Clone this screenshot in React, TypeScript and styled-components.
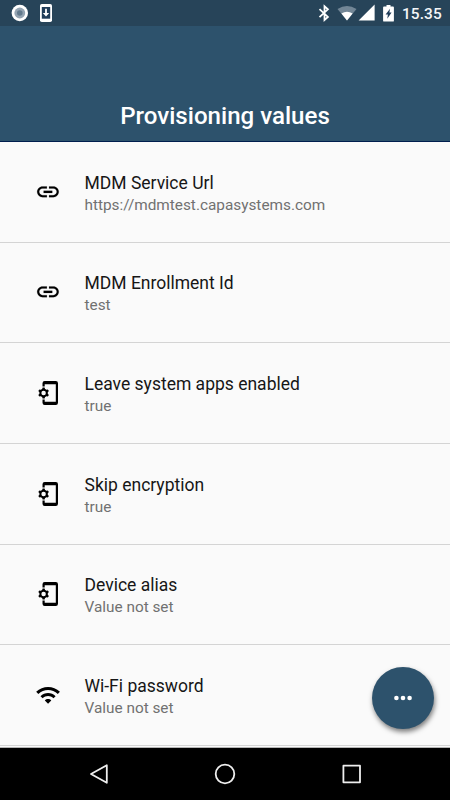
import React from "react";
import styled, { createGlobalStyle } from "styled-components";

const GlobalStyle = createGlobalStyle`
  *, *::before, *::after { box-sizing: border-box; }
  body { margin: 0; font-family: Roboto, sans-serif; background: #fafafa; }
  svg { display: block; flex: none; }
`;

const Screen = styled.div`
  position: relative;
  width: 450px;
  height: 800px;
  overflow: hidden;
  display: flex;
  flex-direction: column;
  background: #fafafa;
`;

const StatusBar = styled.div`
  height: 26px;
  flex: none;
  display: flex;
  align-items: center;
  justify-content: space-between;
  padding: 0 9px 0 11px;
  background: #274459;
`;

const StatusGroup = styled.div<{ $gap: number }>`
  display: flex;
  align-items: center;
  gap: ${(p) => p.$gap}px;
`;

const Clock = styled.span`
  width: 39px;
  margin-left: 1px;
  padding-top: 2px;
  font-size: 15.4px;
  font-weight: 500;
  line-height: 26px;
  letter-spacing: 0.1px;
  color: #f4f6f8;
  white-space: nowrap;
`;

const Header = styled.header`
  height: 116px;
  flex: none;
  display: flex;
  align-items: flex-end;
  justify-content: center;
  padding-bottom: 10px;
  background: #2d526c;
  border-bottom: 1px solid #001e4e;
`;

const Title = styled.h1`
  margin: 0;
  font-size: 24.1px;
  line-height: 30px;
  font-weight: 500;
  color: #fff;
`;

const List = styled.ul`
  list-style: none;
  margin: 0;
  padding: 0;
  flex: 1;
  min-height: 0;
  overflow: hidden;
  border-bottom: 1px solid #b5b5b5;
`;

const Row = styled.li`
  height: 100.65px;
  display: flex;
  align-items: center;
  padding: 0 36px;
  border-bottom: 1px solid #d4d4d4;
`;

const IconSlot = styled.span`
  width: 48.5px;
  flex: none;
`;

const RowText = styled.div`
  display: flex;
  flex-direction: column;
  padding-top: 3.7px;
`;

const Label = styled.span`
  font-size: 17.5px;
  line-height: 22px;
  color: #161616;
`;

const Value = styled.span`
  font-size: 15.35px;
  line-height: 22px;
  color: #717171;
`;

const Fab = styled.button`
  position: absolute;
  left: 372px;
  top: 667px;
  width: 62px;
  height: 62px;
  padding: 0;
  border: 0;
  border-radius: 50%;
  display: grid;
  place-items: center;
  background: #2d526c;
  box-shadow: 1px 3px 5px rgba(0, 0, 0, 0.5);
`;

const NavBar = styled.nav`
  height: 52px;
  flex: none;
  display: flex;
  align-items: center;
  justify-content: space-between;
  padding: 0 86px;
  background: #000;
`;

const RecordIcon = () => (
  <svg width="18" height="18" viewBox="0 0 18 18">
    <circle cx="8.8" cy="9" r="8.2" fill="#fff" />
    <circle cx="8.8" cy="9" r="5.4" fill="#94a4b2" />
    <circle cx="8.8" cy="9" r="2.8" fill="#627a8d" />
  </svg>
);

const DownloadIcon = () => (
  <svg width="12" height="18" viewBox="0 0 12 18">
    <rect width="12" height="18" rx="1.8" fill="#fff" />
    <rect x="1.8" y="3" width="8.4" height="11.7" fill="#203d5a" />
    <path d="M5.1 4.8h1.8v4.1h2.3L6 12.4 2.8 8.9h2.3z" fill="#fff" />
  </svg>
);

const BluetoothIcon = () => (
  <svg width="12" height="18" viewBox="0 0 12 18" fill="none" stroke="#fff" strokeWidth="1.8">
    <path d="M1.5 5.2 9.9 12.9 6.5 15.9V2.3l3.4 3-8.4 7.9" />
  </svg>
);

const SignalIcon = () => (
  <svg width="39" height="18" viewBox="0 0 39 18">
    <path d="M.5 4.9Q10 -.9 19.5 4.9L10 16.6z" fill="#728696" />
    <path d="M4.4 9.6Q10 6.1 15.6 9.6L10 16.6z" fill="#fff" />
    <path d="M37.6 .6V16.6H21.6z" fill="#fff" />
  </svg>
);

const BatteryIcon = () => (
  <svg width="11" height="17" viewBox="0 0 11 17">
    <path
      d="M3.5 0h4v1.6H10q.9 0 .9.9v13.2q0 .9-.9.9H1q-.9 0-.9-.9V2.5q0-.9.9-.9h2.5z"
      fill="#fff"
    />
    <path d="M7 3.8 6.4 7.5h2.2L4.3 13.8l.6-4.3H2.6z" fill="#203d5a" />
  </svg>
);

const LinkIcon = () => (
  <svg width="24" height="24" viewBox="0 0 24 24">
    <path
      transform="translate(-1 -1.1) scale(1.08)"
      d="M3.9 12c0-1.71 1.39-3.1 3.1-3.1h4V7H7c-2.76 0-5 2.24-5 5s2.24 5 5 5h4v-1.9H7c-1.71 0-3.1-1.39-3.1-3.1zM8 13h8v-2H8v2zm9-6h-4v1.9h4c1.71 0 3.1 1.39 3.1 3.1s-1.39 3.1-3.1 3.1h-4V17h4c2.76 0 5-2.24 5-5s-2.24-5-5-5z"
      stroke="#000"
      strokeWidth="0.15"
    />
  </svg>
);

const teeth = [0, 60, 120, 180, 240, 300];

const PhoneSettingsIcon = () => (
  <svg width="24" height="26" viewBox="0 0 24 26">
    <path
      fillRule="evenodd"
      d="M6.5 6.4V3.2Q6.5 1 8.7 1H19.8Q22 1 22 3.2V22.8Q22 25 19.8 25H8.7Q6.5 25 6.5 22.8V19.6H8.7V21.7H19.8V4.3H8.7V6.4z"
    />
    <circle cx="7.6" cy="13" r="3.2" fill="none" stroke="#000" strokeWidth="1.9" />
    {teeth.map((angle) => (
      <path key={angle} transform={`rotate(${angle} 7.6 13)`} d="M5.9 10 6.6 7.5h2l.7 2.5z" />
    ))}
  </svg>
);

const WifiIcon = () => (
  <svg width="24" height="24" viewBox="0 0 24 24">
    <path
      transform="translate(-.9 -.9) scale(1.08)"
      d="m1 9 2 2c4.97-4.97 13.03-4.97 18 0l2-2C16.93 2.93 7.08 2.93 1 9zm8 8 3 3 3-3c-1.65-1.66-4.34-1.66-6 0zm-4-4 2 2c2.76-2.76 7.24-2.76 10 0l2-2C15.14 9.14 8.87 9.14 5 13z"
    />
  </svg>
);

const NavIcon = ({ children }: { children: React.ReactNode }) => (
  <svg width="24" height="24" viewBox="0 0 24 24" fill="none" stroke="#eee" strokeWidth="1.8">
    {children}
  </svg>
);

const items = [
  { label: "MDM Service Url", value: "https://mdmtest.capasystems.com", Icon: LinkIcon },
  { label: "MDM Enrollment Id", value: "test", Icon: LinkIcon },
  { label: "Leave system apps enabled", value: "true", Icon: PhoneSettingsIcon },
  { label: "Skip encryption", value: "true", Icon: PhoneSettingsIcon },
  { label: "Device alias", value: "Value not set", Icon: PhoneSettingsIcon },
  { label: "Wi-Fi password", value: "Value not set", Icon: WifiIcon },
];

export default function App() {
  return (
    <Screen>
      <GlobalStyle />
      <StatusBar>
        <StatusGroup $gap={11}>
          <RecordIcon />
          <DownloadIcon />
        </StatusGroup>
        <StatusGroup $gap={7}>
          <BluetoothIcon />
          <SignalIcon />
          <BatteryIcon />
          <Clock>15.35</Clock>
        </StatusGroup>
      </StatusBar>
      <Header>
        <Title>Provisioning values</Title>
      </Header>
      <List>
        {items.map(({ label, value, Icon }) => (
          <Row key={label}>
            <IconSlot>
              <Icon />
            </IconSlot>
            <RowText>
              <Label>{label}</Label>
              <Value>{value}</Value>
            </RowText>
          </Row>
        ))}
      </List>
      <Fab aria-label="More">
        <svg width="20" height="8" viewBox="0 0 20 8" fill="#fff">
          <circle cx="3.4" cy="4" r="2.3" />
          <circle cx="10" cy="4" r="2.3" />
          <circle cx="16.6" cy="4" r="2.3" />
        </svg>
      </Fab>
      <NavBar>
        <NavIcon>
          <path d="M20.8 3.2V20.8L5 12z" strokeLinejoin="round" />
        </NavIcon>
        <NavIcon>
          <circle cx="12" cy="12" r="9.3" />
        </NavIcon>
        <NavIcon>
          <rect x="3.4" y="3.7" width="16.6" height="16.6" strokeLinejoin="round" />
        </NavIcon>
      </NavBar>
    </Screen>
  );
}
